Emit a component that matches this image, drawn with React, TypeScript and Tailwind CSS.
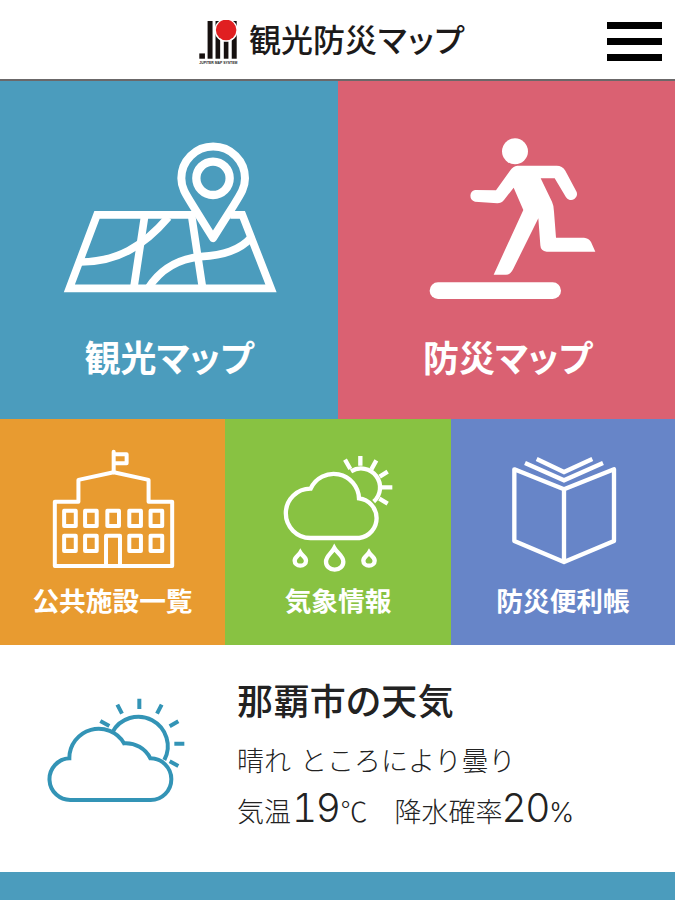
import type { ReactNode } from "react";

function Logo() {
  return (
    <svg viewBox="24 30 122 136" className="h-[45px] w-[41px] shrink-0" role="img" aria-label="JM">
      <g fill="#16100f">
        <rect x="27" y="131" width="17" height="16" />
        <rect x="52" y="33" width="15" height="114" />
        <rect x="76" y="33" width="14" height="114" />
        <rect x="101" y="80" width="14" height="67" />
        <rect x="125" y="33" width="15" height="114" />
      </g>
      <circle cx="108" cy="61" r="35" fill="#fff" />
      <circle cx="108" cy="60" r="31" fill="#e01f21" />
      <text x="27" y="162" textLength="115" lengthAdjust="spacingAndGlyphs" fontSize="11" fontWeight="700" fontFamily="Liberation Sans, sans-serif" fill="#222">JUPITER MAP SYSTEM</text>
    </svg>
  );
}

function MapIcon() {
  return (
    <svg viewBox="0 0 720 540" className="ml-[50px] h-[180px] w-[240px]" fill="none" stroke="#fff" strokeWidth="23">
      <path d="M436 254.500 H141 L58 475 H663 L577 254.500 H541" />
      <path d="M284 258 L252 470 M425 258 L457 470" />
      <path d="M92 396 C200 396 280 350 355 262" />
      <path d="M295 474 C335 412 390 386 452 380 C520 375 568 362 604 322" />
      <path d="M489 324 L428 226 C405 190 394 172 394 145 A95.500 95.500 0 0 1 585 145 C585 172 574 190 551 226 Z" strokeWidth="24" strokeLinejoin="round" />
      <circle cx="489" cy="145" r="50" strokeWidth="25" />
    </svg>
  );
}

function EscapeIcon() {
  return (
    <svg viewBox="0 0 570 540" className="ml-[82px] h-[180px] w-[190px]" fill="#fff">
      <circle cx="285" cy="64" r="39" />
      <path d="M292 107 L410 107 Q427 107 436 122 L468 182 A18 18 0 0 1 438 202 L404 145 L362 145 L396 215 Q402 228 402 245 L408 323 L492 323 Q506 324 513 336 L526 365 L380 365 Q362 364 361 346 L355 265 L280 416 Q271 434 258 434 L221 434 L310 240 L281 173 L252 210 Q244 220 232 220 L165 215 A18 18 0 0 1 165 180 L228 181 L270 122 Q279 108 292 107 Z" />
      <rect x="29" y="457" width="394" height="50" rx="25" />
    </svg>
  );
}

function SchoolIcon() {
  return (
    <svg viewBox="0 0 450 400" className="ml-[40px] h-[133px] w-[150px]" fill="none" stroke="#fff" strokeWidth="12" strokeLinejoin="round">
      <path d="M44 186 H115 V120 L221 97 L326 120 V186 H397 V379 H44 Z" />
      <path d="M221 35 V97 M221 43 H260 V70 H221" strokeLinecap="round" />
      {[72, 135, 202, 268, 332].map((x) => <rect key={x} x={x} y="213" width="35" height="46" />)}
      {[72, 135, 268, 332].map((x) => <rect key={x} x={x} y="288" width="35" height="46" />)}
      <path d="M198 379 V288 H240 V379" />
    </svg>
  );
}

function RainIcon() {
  return (
    <svg viewBox="0 0 420 390" className="ml-[45px] h-[130px] w-[140px]" fill="none" stroke="#fff" strokeWidth="13">
      <path d="M121 279 A74 74 0 0 1 122 131 A76 76 0 0 1 267 160 A60 60 0 0 1 268 279 Z" strokeLinejoin="miter" />
      <path d="M243 79 A57 57 0 0 1 311 170" />
      <path d="M271 33 V62 M225 44 L241 72 M319 46 L304 73 M353 80 L329 95 M334 127 H367 M353 176 L328 161" />
      <path d="M193 309 C185 325 168 333 168 350 A26 24 0 0 0 220 350 C220 333 202 325 193 309 Z" />
      {[91, 297].map((x) => <path key={x} transform={`translate(${x} 0)`} d="M0 323 C-5 332 -17 336 -17 347 A17 15 0 0 0 17 347 C17 336 5 332 0 323 Z" />)}
    </svg>
  );
}

function BookIcon() {
  return (
    <svg viewBox="0 0 495 390" className="ml-[29px] h-[130px] w-[165px]" fill="none" stroke="#fff" strokeWidth="13" strokeLinejoin="round">
      <path d="M103 73 L252 133 L402 73 V288 L252 351 L103 288 Z M252 133 V351" />
      <path d="M135 54 L252 106 L369 54 M170 42 L252 81 L337 42" strokeLinejoin="miter" />
    </svg>
  );
}

function SunnyCloudIcon() {
  return (
    <svg viewBox="0 0 540 420" className="h-[140px] w-[180px] shrink-0" fill="none" stroke="#3394b6" strokeWidth="12">
      <path d="M124 360 A62.500 62.500 0 0 1 118 235 A88 88 0 0 1 282 190 A82 82 0 0 1 361 235 A62.500 62.500 0 0 1 362 360 Z" />
      <path d="M247 157 A88 88 0 0 1 403 240" />
      <path d="M328 56 V87 M262 74 L276 101 M395 74 L381 101 M445 124 L419 139 M433 191 H463 M419 244 L445 258 M211 123 L238 138" />
    </svg>
  );
}

function Tile({ color, label, small, children }: { color: string; label: string; small?: boolean; children: ReactNode }) {
  return (
    <a href="#" className={`flex flex-col text-white ${color} ${small ? "h-[226px]" : "h-[338px] pt-[49px]"}`}>
      {children}
      <span className={small ? "mt-auto mb-[26px] text-center text-[26.7px] leading-[38px] font-bold" : "mt-[20px] text-center text-[36px] leading-[52px] font-bold"}>{label}</span>
    </a>
  );
}

export default function App() {
  return (
    <div className="flex h-[900px] w-[675px] flex-col overflow-hidden bg-white font-['Noto_Sans_CJK_JP',sans-serif] [font-feature-settings:'palt']">
      <header className="flex h-[81px] shrink-0 items-start border-b-2 border-[#6b6869] pr-[13px] pl-[198px]">
        <div className="mt-5"><Logo /></div>
        <h1 className="mt-[15px] ml-[10px] text-[32px] leading-[46px] font-medium whitespace-nowrap text-[#1c1a1a]">
          観光防災<span className="ml-px tracking-[1.5px]">マップ</span>
        </h1>
        <button aria-label="menu" className="mt-[22px] ml-auto flex w-[55px] flex-col gap-[9px]">
          <span className="h-[7px] bg-black" />
          <span className="h-[7px] bg-black" />
          <span className="h-[7px] bg-black" />
        </button>
      </header>

      <nav className="shrink-0">
        <div className="grid grid-cols-[338px_337px]">
          <Tile color="bg-[#4b9cbd]" label="観光マップ"><MapIcon /></Tile>
          <Tile color="bg-[#da6172] pl-[2px]" label="防災マップ"><div className="-ml-[2px]"><EscapeIcon /></div></Tile>
        </div>
        <div className="grid grid-cols-[225px_226px_224px]">
          <Tile small color="bg-[#e89b30] pt-[21px]" label="公共施設一覧"><SchoolIcon /></Tile>
          <Tile small color="bg-[#88c242] pt-[26px]" label="気象情報"><RainIcon /></Tile>
          <Tile small color="bg-[#6785c8] pt-[26px]" label="防災便利帳"><BookIcon /></Tile>
        </div>
      </nav>

      <section className="flex h-[227px] shrink-0 pt-[35px] pl-[30px] text-[#222]">
        <SunnyCloudIcon />
        <div className="ml-[27px] whitespace-nowrap">
          <h2 className="-mt-[7px] text-[36px] leading-[52px] font-medium tracking-[0.4px]">那覇市の天気</h2>
          <div className="[font-feature-settings:normal] text-[27px] font-light">
            <p className="mt-[15px] leading-[40px] [word-spacing:3px]">晴れ ところにより曇り</p>
            <p className="mt-[5px] flex items-baseline leading-[46px]">
              <span>気温</span>
              <span className="ml-px font-[Inter] text-[39px] tracking-[-1.5px] tabular-nums">19</span>
              <span className="ml-px">℃</span>
              <span className="ml-[27px]">降水確率</span>
              <span className="-ml-px font-[Inter] text-[39px] tracking-[-1.5px] tabular-nums">20</span>
              <span className="font-[Inter]">%</span>
            </p>
          </div>
        </div>
      </section>

      <footer className="grow bg-[#4b9cbd]" />
    </div>
  );
}
